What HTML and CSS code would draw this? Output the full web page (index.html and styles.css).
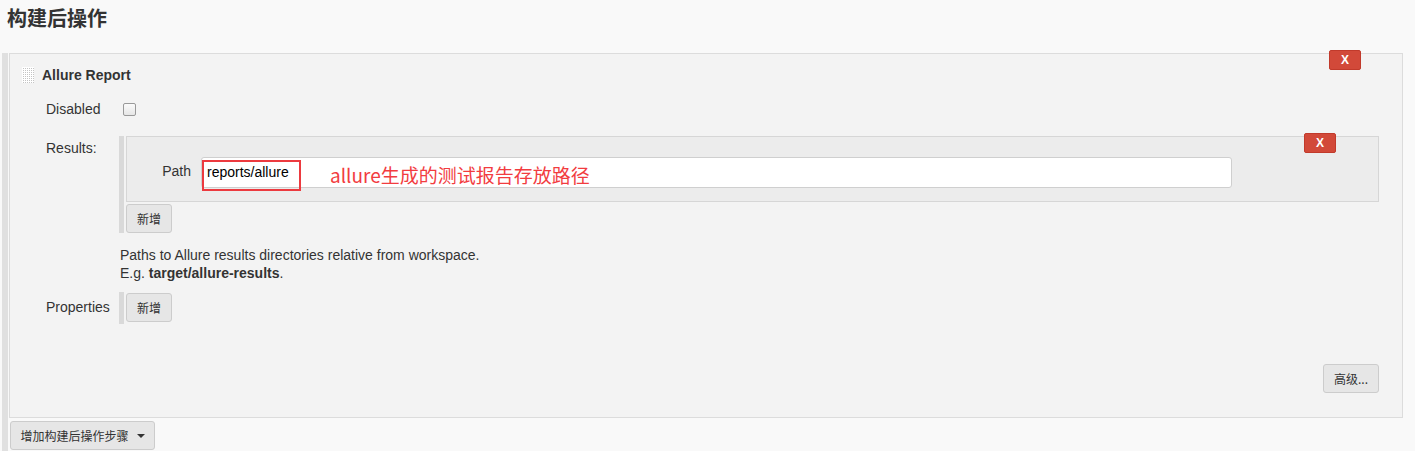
FILE: index.html
```html
<!DOCTYPE html>
<html lang="zh">
<head>
<meta charset="utf-8">
<title>构建后操作</title>
<link rel="stylesheet" href="styles.css">
</head>
<body>
<h1 class="title">构建后操作</h1>
<div class="section">
  <div class="section-bar"></div>
  <div class="section-body">
    <div class="panel">
      <button class="btn-del btn-del-outer">X</button>
      <div class="panel-head">
        <span class="grip"></span>
        <span class="panel-name">Allure Report</span>
      </div>
      <div class="row row-disabled">
        <div class="label">Disabled</div>
        <div class="field"><span class="checkbox"></span></div>
      </div>
      <div class="row row-results">
        <div class="label label-top">Results:</div>
        <div class="field">
          <div class="repeat">
            <div class="repeat-bar"></div>
            <div class="repeat-body">
              <div class="chunk">
                <button class="btn-del btn-del-inner">X</button>
                <div class="chunk-row">
                  <span class="chunk-label">Path</span>
                  <div class="input">reports/allure</div>
                  <span class="mark-box"></span>
                  <span class="note">allure生成的测试报告存放路径</span>
                </div>
              </div>
              <button class="btn">新增</button>
            </div>
          </div>
        </div>
      </div>
      <div class="help">
        <div>Paths to Allure results directories relative from workspace.</div>
        <div>E.g. <b>target/allure-results</b>.</div>
      </div>
      <div class="row row-props">
        <div class="label">Properties</div>
        <div class="field">
          <div class="repeat">
            <div class="repeat-bar"></div>
            <div class="repeat-body"><button class="btn">新增</button></div>
          </div>
        </div>
      </div>
      <div class="advanced"><button class="btn btn-adv">高级...</button></div>
    </div>
    <button class="btn btn-add">增加构建后操作步骤 <span class="caret"></span></button>
  </div>
</div>
</body>
</html>
```

FILE: styles.css
```css
html, body {
  margin: 0;
  padding: 0;
}
body {
  background: #f9f9f9;
  font-family: "Liberation Sans", Arial, "Noto Sans CJK SC", sans-serif;
  font-size: 14px;
  color: #333;
  width: 1415px;
  height: 451px;
  overflow: hidden;
}
.title {
  margin: 0;
  padding: 5px 0 0 7px;
  height: 53px;
  box-sizing: border-box;
  font-family: "Noto Sans CJK SC", sans-serif;
  font-size: 20px;
  line-height: 26px;
  font-weight: 700;
  color: #333;
}
.section {
  display: flex;
  padding-left: 2px;
}
.section-bar {
  width: 6px;
  background: #e0e0e0;
  height: 398px;
  margin-right: 1px;
}
.section-body {
  display: flex;
  flex-direction: column;
}
.panel {
  position: relative;
  width: 1394px;
  height: 365px;
  background: #f3f3f3;
  border: 1px solid #dcdcdc;
  box-sizing: border-box;
}
.btn-del {
  position: absolute;
  width: 32px;
  height: 20px;
  background: #d24939;
  border: 1px solid #c13a2b;
  border-radius: 2px;
  color: #fff;
  font-family: "Liberation Sans", Arial, sans-serif;
  font-size: 12px;
  font-weight: 700;
  line-height: 17px;
  padding: 0;
  box-sizing: border-box;
}
.btn-del-outer {
  top: -4px;
  right: 41px;
}
.btn-del-inner {
  top: -4px;
  right: 42px;
}
.panel-head {
  display: flex;
  align-items: center;
  height: 22px;
  margin-top: 10px;
  padding-left: 12px;
}
.grip {
  width: 12px;
  height: 16px;
  margin-right: 8px;
  background-color: #c4c4c4;
  background-image:
    linear-gradient(to right, #fff 50%, transparent 50%),
    linear-gradient(to bottom, #fff 50%, transparent 50%);
  background-size: 2px 2px;
}
.panel-name {
  font-weight: 700;
  font-size: 14px;
  color: #333;
}
.row {
  display: flex;
}
.label {
  width: 73px;
  padding-left: 36px;
  flex: none;
  color: #333;
}
.row-disabled {
  align-items: center;
  height: 24px;
  margin-top: 11px;
}
.checkbox {
  display: block;
  width: 11px;
  height: 11px;
  border: 1px solid #999;
  border-radius: 2px;
  background: linear-gradient(#fafafa, #e6e6e6);
  margin-left: 4px;
}
.row-results {
  margin-top: 15px;
}
.label-top {
  padding-top: 4px;
}
.repeat {
  display: flex;
}
.repeat-bar {
  width: 5px;
  background: #d9d9d9;
  margin-right: 2px;
  flex: none;
}
.repeat-body {
  display: flex;
  flex-direction: column;
  align-items: flex-start;
}
.chunk {
  position: relative;
  width: 1253px;
  height: 66px;
  box-sizing: border-box;
  background: #ececec;
  border: 1px solid #d6d6d6;
  margin-bottom: 2px;
}
.chunk-row {
  position: relative;
  display: flex;
  align-items: center;
  margin-top: 20px;
  height: 31px;
}
.chunk-label {
  width: 64px;
  text-align: right;
  flex: none;
  margin-right: 10px;
  margin-top: -3px;
}
.input {
  width: 1031px;
  height: 31px;
  box-sizing: border-box;
  background: #fff;
  border: 1px solid #cfcfcf;
  border-radius: 3px;
  padding: 0 5px;
  line-height: 29px;
  color: #000;
  font-size: 14px;
}
.mark-box {
  position: absolute;
  left: 75px;
  top: 3px;
  width: 99px;
  height: 31px;
  box-sizing: border-box;
  border: 2px solid #ec3a3f;
}
.note {
  position: absolute;
  left: 203px;
  top: 5px;
  font-family: "Noto Sans CJK SC", sans-serif;
  font-size: 19px;
  font-weight: 400;
  line-height: 26px;
  color: #f23c3f;
}
.btn {
  height: 29px;
  padding: 0 9px;
  background: #e6e6e6;
  border: 1px solid #ccc;
  border-radius: 3px;
  font-family: "Noto Sans CJK SC", sans-serif;
  font-size: 12px;
  color: #333;
  box-sizing: border-box;
}
.repeat-body > .btn {
  width: 46px;
  padding: 0;
}
.help {
  padding-left: 110px;
  margin-top: 13px;
  line-height: 18px;
  color: #333;
}
.row-props {
  margin-top: 10px;
}
.row-props .label {
  padding-top: 7px;
}
.row-props .repeat-body {
  padding: 1px 0 2px;
}
.advanced {
  display: flex;
  justify-content: flex-end;
  padding-right: 23px;
  margin-top: 40px;
}
.btn-adv {
  width: 56px;
  padding: 0;
}
.btn-add {
  margin-top: 3px;
  margin-left: 1px;
  width: 145px;
  display: flex;
  align-items: center;
  justify-content: center;
  gap: 8px;
}
.caret {
  width: 0;
  height: 0;
  border-left: 4px solid transparent;
  border-right: 4px solid transparent;
  border-top: 4px solid #333;
}
```
